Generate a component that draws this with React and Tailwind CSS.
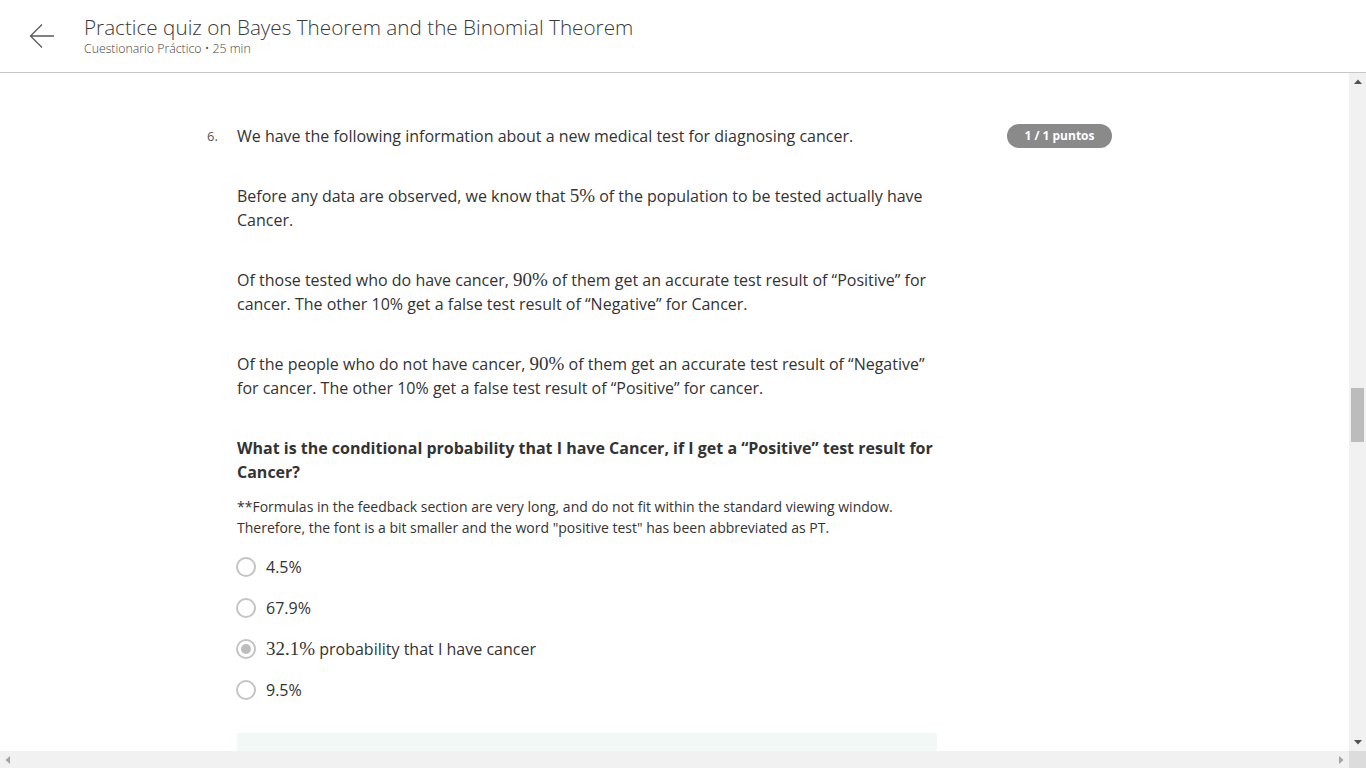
import React from "react";

const M = ({ children }) => (
  <span className="font-['Liberation_Serif',serif] text-[19px] leading-[1]">{children}</span>
);

function Radio({ checked }) {
  return (
    <span className="w-[20px] h-[20px] rounded-full border-2 border-[#c4c4c4] flex items-center justify-center shrink-0 bg-white">
      {checked && <span className="w-[10px] h-[10px] rounded-full bg-[#bdbdbd]" />}
    </span>
  );
}

function Option({ checked, children }) {
  return (
    <div className="flex items-center h-[24px] mb-[17px]">
      <div className="-ml-[1px]"><Radio checked={checked} /></div>
      <div className="ml-[10px] text-[16px] leading-[24px] text-[#333333]">{children}</div>
    </div>
  );
}

export default function App() {
  return (
    <div className="w-full h-screen flex flex-col bg-white overflow-hidden font-['Open_Sans',sans-serif] text-[#333333]">
      <header className="h-[73px] shrink-0 border-b border-[#c6c6c6] flex items-center pl-[29px]">
        <svg width="26" height="26" viewBox="0 0 26 26" className="shrink-0">
          <path d="M25 13 H1.5 M13 1.5 L1.5 13 L13 24.5" fill="none" stroke="#5a5a5a" strokeWidth="1.3" />
        </svg>
        <div className="ml-[29px] flex flex-col -mt-[2px]">
          <div className="text-[20.7px] leading-[28px] text-[#3a3a3a] font-light">
            Practice quiz on Bayes Theorem and the Binomial Theorem
          </div>
          <div className="text-[12.3px] leading-[16px] text-[#444] font-light">Cuestionario Práctico • 25 min</div>
        </div>
      </header>

      <div className="flex-1 min-h-0 flex flex-col">
        <div className="flex-1 min-h-0 flex">
          <main className="flex-1 min-w-0 overflow-hidden pl-[207px] pt-[51px]">
            <div className="flex">
              <div className="w-[30px] shrink-0 text-[13px] leading-[24px] text-[#555]">6.</div>
              <div className="w-[700px] shrink-0 text-[16px] leading-[24px] text-[#333333]">
                <p className="mb-[36px]">We have the following information about a new medical test for diagnosing cancer.</p>
                <p className="mb-[36px]">
                  Before any data are observed, we know that <M>5%</M> of the population to be tested actually have Cancer.
                </p>
                <p className="mb-[36px]">
                  Of those tested who do have cancer, <M>90%</M> of them get an accurate test result of “Positive” for cancer. The other 10% get a false test result of “Negative” for Cancer.
                </p>
                <p className="mb-[36px]">
                  Of the people who do not have cancer, <M>90%</M> of them get an accurate test result of “Negative” for cancer. The other 10% get a false test result of “Positive” for cancer.
                </p>
                <p className="font-bold mb-[12px]">
                  What is the conditional probability that I have Cancer, if I get a “Positive” test result for Cancer?
                </p>
                <p className="text-[14px] leading-[21px] mb-[17px]">
                  **Formulas in the feedback section are very long, and do not fit within the standard viewing window. Therefore, the font is a bit smaller and the word "positive test" has been abbreviated as PT.
                </p>
                <Option>4.5%</Option>
                <Option>67.9%</Option>
                <Option checked>
                  <M>32.1%</M> probability that I have cancer
                </Option>
                <Option>9.5%</Option>
                <div className="mt-[31px] h-[120px] bg-[#f2f8f5]" />
              </div>
              <div className="ml-[70px] shrink-0">
                <div className="w-[105px] h-[24px] rounded-full bg-[#8a8a8a] text-white text-[12px] font-bold flex items-center justify-center">
                  1 / 1 puntos
                </div>
              </div>
            </div>
          </main>
          <div className="w-[17px] shrink-0 bg-[#f1f1f1] flex flex-col items-center">
            <div className="h-[17px] flex items-center justify-center">
              <svg width="8" height="5" viewBox="0 0 8 5"><path d="M0 5 L4 0.5 L8 5 Z" fill="#505050" /></svg>
            </div>
            <div className="mt-[298px] w-[13px] h-[54px] bg-[#bcbcbc]" />
            <div className="flex-1" />
            <div className="h-[17px] flex items-center justify-center">
              <svg width="8" height="5" viewBox="0 0 8 5"><path d="M0 0 L8 0 L4 4.5 Z" fill="#505050" /></svg>
            </div>
          </div>
        </div>
        <div className="h-[17px] shrink-0 flex">
          <div className="flex-1 bg-[#f1f1f1] flex items-center justify-between px-[5px]">
            <svg width="5" height="8" viewBox="0 0 5 8"><path d="M5 0 L5 8 L0.5 4 Z" fill="#a3a3a3" /></svg>
            <svg width="5" height="8" viewBox="0 0 5 8"><path d="M0 0 L0 8 L4.5 4 Z" fill="#a3a3a3" /></svg>
          </div>
          <div className="w-[17px] bg-[#dcdcdc]" />
        </div>
      </div>
    </div>
  );
}
